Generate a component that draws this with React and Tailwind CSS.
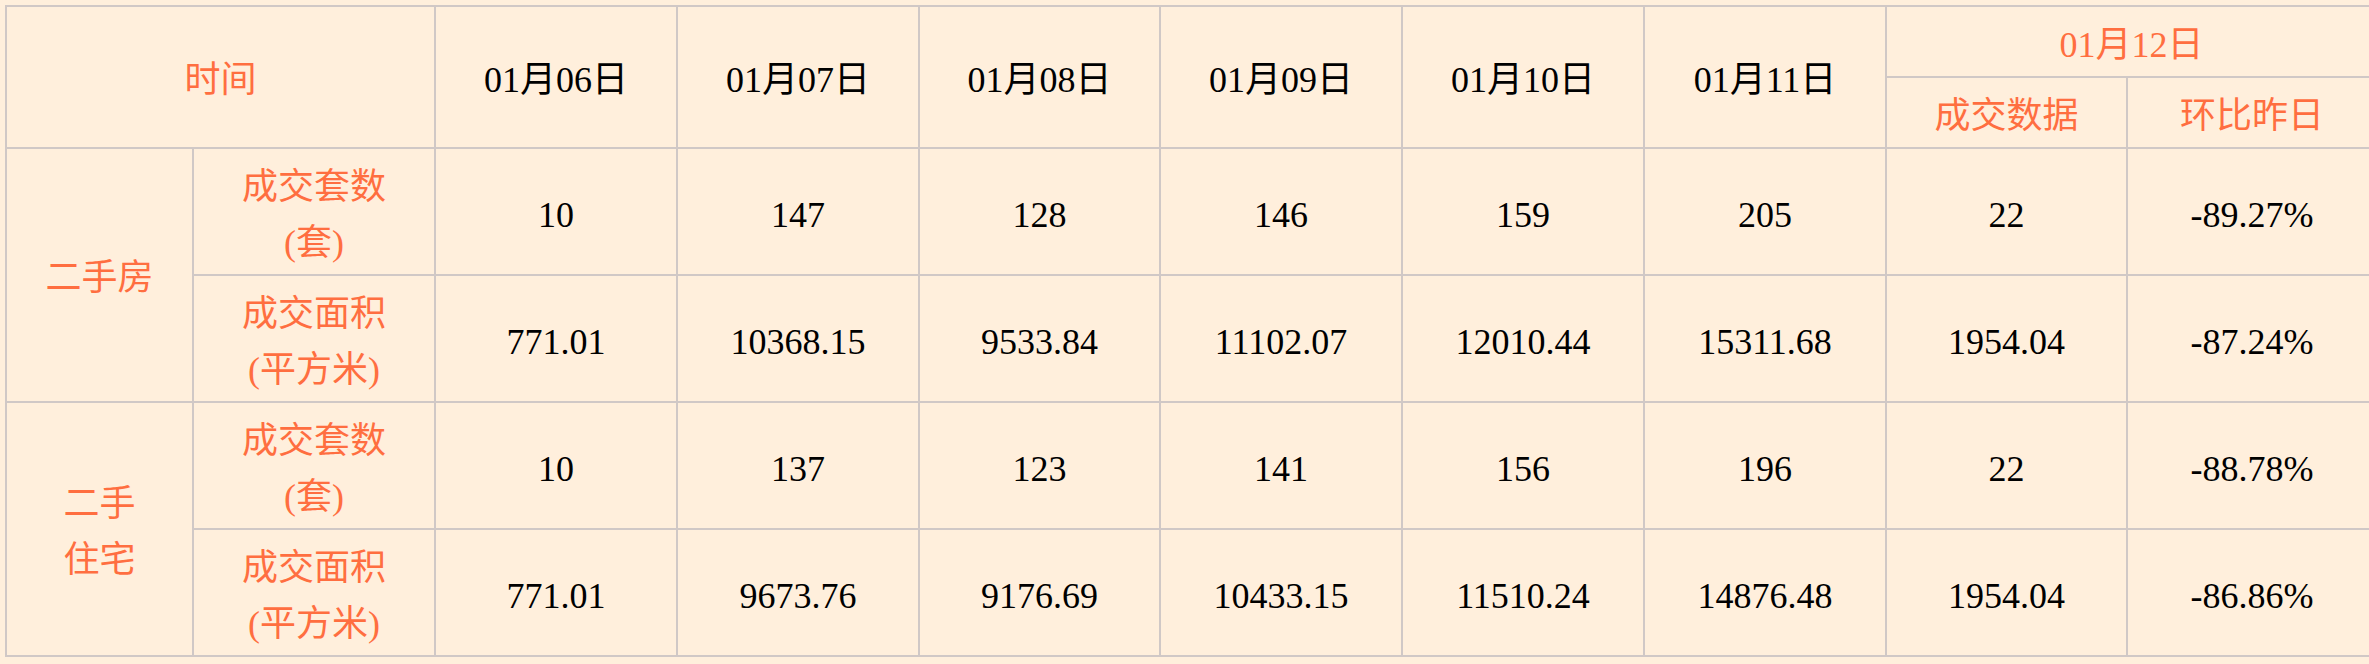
const DATES = ["01月06日", "01月07日", "01月08日", "01月09日", "01月10日", "01月11日"];

const GROUPS = [
    {
        name: ["二手房"],
        rows: [
            {
                label: ["成交套数", "(套)"],
                values: ["10", "147", "128", "146", "159", "205", "22", "-89.27%"],
            },
            {
                label: ["成交面积", "(平方米)"],
                values: ["771.01", "10368.15", "9533.84", "11102.07", "12010.44", "15311.68", "1954.04", "-87.24%"],
            },
        ],
    },
    {
        name: ["二手", "住宅"],
        rows: [
            {
                label: ["成交套数", "(套)"],
                values: ["10", "137", "123", "141", "156", "196", "22", "-88.78%"],
            },
            {
                label: ["成交面积", "(平方米)"],
                values: ["771.01", "9673.76", "9176.69", "10433.15", "11510.24", "14876.48", "1954.04", "-86.86%"],
            },
        ],
    },
];

const CELL = "border-2 border-[#d0c8c6] text-center align-middle px-6 pt-[6px] pb-0 font-normal";
const ORANGE = "text-[#ff6e40]";

function Lines({ lines }) {
    return (
        <div className="flex flex-col items-center leading-[56px]">
            {lines.map((line) => (
                <span key={line} className="whitespace-nowrap">{line}</span>
            ))}
        </div>
    );
}

export default function App() {
    return (
        <div className="w-full min-h-screen overflow-hidden bg-[#ffefdc] pt-[5px] pl-[5px] font-['Liberation_Serif','Noto_Sans_CJK_SC',serif] text-[36px] text-black">
            <table className="table-fixed border-collapse w-[2371px]">
                <colgroup>
                    <col className="w-[187px]" />
                    <col className="w-[242px]" />
                    <col className="w-[242px]" />
                    <col className="w-[242px]" />
                    <col className="w-[241px]" />
                    <col className="w-[242px]" />
                    <col className="w-[242px]" />
                    <col className="w-[242px]" />
                    <col className="w-[241px]" />
                    <col className="w-[250px]" />
                </colgroup>
                <thead>
                    <tr className="h-[71px]">
                        <th rowSpan={2} colSpan={2} className={`${CELL} ${ORANGE}`}>时间</th>
                        {DATES.map((d) => (
                            <th key={d} rowSpan={2} className={`${CELL} whitespace-nowrap`}>{d}</th>
                        ))}
                        <th colSpan={2} className={`${CELL} ${ORANGE}`}>01月12日</th>
                    </tr>
                    <tr className="h-[71px]">
                        <th className={`${CELL} ${ORANGE} whitespace-nowrap`}>成交数据</th>
                        <th className={`${CELL} ${ORANGE} whitespace-nowrap`}>环比昨日</th>
                    </tr>
                </thead>
                <tbody>
                    {GROUPS.map((group) =>
                        group.rows.map((row, i) => (
                            <tr key={group.name.join("") + i} className="h-[127px]">
                                {i === 0 && (
                                    <td rowSpan={group.rows.length} className={`${CELL} ${ORANGE}`}>
                                        <Lines lines={group.name} />
                                    </td>
                                )}
                                <td className={`${CELL} ${ORANGE}`}>
                                    <Lines lines={row.label} />
                                </td>
                                {row.values.map((v, j) => (
                                    <td key={j} className={`${CELL} whitespace-nowrap`}>{v}</td>
                                ))}
                            </tr>
                        ))
                    )}
                </tbody>
            </table>
        </div>
    );
}
